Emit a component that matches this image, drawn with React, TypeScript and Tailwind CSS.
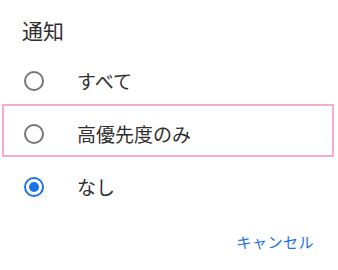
const options = [
  { label: 'すべて', checked: false, highlight: false },
  { label: '高優先度のみ', checked: false, highlight: true },
  { label: 'なし', checked: true, highlight: false },
];

function Radio({ checked }: { checked: boolean }) {
  return (
    <svg width="22" height="22" viewBox="0 0 22 22" className="shrink-0">
      <circle
        cx="11"
        cy="11"
        r="9"
        fill="none"
        stroke={checked ? '#1a73e8' : '#757575'}
        strokeWidth="2"
      />
      {checked && <circle cx="11" cy="11" r="5" fill="#1a73e8" />}
    </svg>
  );
}

export default function App() {
  return (
    <div
      className="flex h-[270px] w-[338px] flex-col bg-white text-[#2f2f2f]"
      style={{ fontFamily: '"Noto Sans CJK JP", "Noto Sans", sans-serif' }}
    >
      <div className="pl-[22px] pt-[16px] text-[21px] leading-[28px]">通知</div>
      <div className="mt-[10px] flex flex-col">
        {options.map((o) => (
          <div className="relative flex h-[53px] items-center pl-[23px]" key={o.label}>
            {o.highlight && (
              <div className="pointer-events-none absolute left-[2px] right-[4px] top-[-3px] h-[53px] border-[2.5px] border-[#fbaac8]" />
            )}
            <Radio checked={o.checked} />
            <span className="ml-[32px] text-[19px] leading-[26px]">{o.label}</span>
          </div>
        ))}
      </div>
      <div className="mt-[19px] flex justify-end pr-[24px]">
        <button className="text-[15px] leading-[20px] tracking-[0.5px] text-[#1a73e8]">
          キャンセル
        </button>
      </div>
    </div>
  );
}
